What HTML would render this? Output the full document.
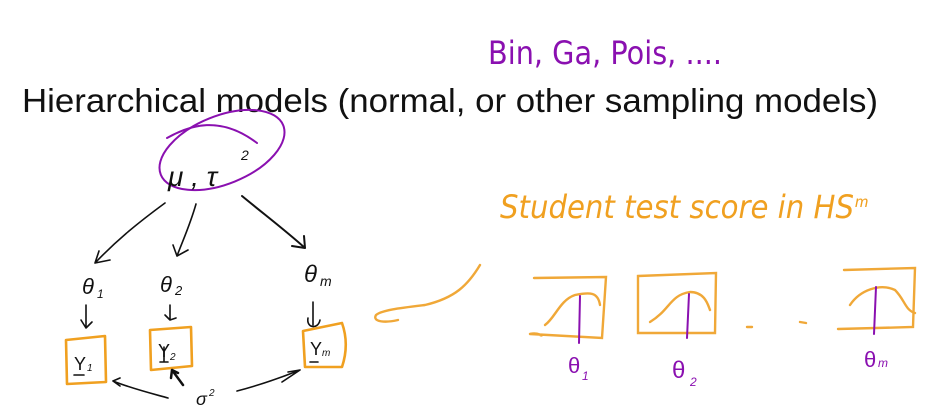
<!DOCTYPE html>
<html><head><meta charset="utf-8"><style>
html,body{margin:0;padding:0;background:#fff;width:938px;height:412px;overflow:hidden}
svg{display:block}
.k{fill:none;stroke:#111;stroke-width:1.6;stroke-linecap:round;stroke-linejoin:round}
.p{fill:none;stroke:#8a10b0;stroke-width:2;stroke-linecap:round;stroke-linejoin:round}
.o{fill:none;stroke:#f0a020;stroke-width:2.6;stroke-linecap:round;stroke-linejoin:round}
.ot{fill:none;stroke:#f0a838;stroke-width:2.4;stroke-linecap:round}
.hk{font-family:"Liberation Sans",sans-serif;font-style:italic;fill:#111}
.hp{font-family:"Liberation Sans",sans-serif;font-style:italic;fill:#8a10b0}
.ho{font-family:"Liberation Sans",sans-serif;font-style:italic;fill:#f0a020}
</style></head><body>
<svg width="938" height="412" viewBox="0 0 938 412" xmlns="http://www.w3.org/2000/svg">
<text x="22" y="112" font-family="Liberation Sans, sans-serif" font-size="33" fill="#111" textLength="856" lengthAdjust="spacingAndGlyphs">Hierarchical models (normal, or other sampling models)</text>
<text x="488" y="64" class="hp" font-size="32" textLength="234" lengthAdjust="spacingAndGlyphs" style="font-style:normal;font-family:'DejaVu Sans',sans-serif">Bin, Ga, Pois, ....</text>
<!-- ellipse -->
<ellipse cx="222" cy="150" rx="66" ry="34" transform="rotate(-22 222 150)" class="p"/>
<path class="p" d="M167 138 C190 125 220 115 257 143"/>
<text x="168" y="186" class="hk" font-size="28">μ ,  τ</text>
<text x="241" y="160" class="hk" font-size="14">2</text>
<!-- arrows -->
<path class="k" d="M165 203 C135 225 115 242 95 263 M95 263 L110 260 M95 263 L99 251"/>
<path class="k" d="M196 204 C190 225 183 240 177 256 M177 256 L173 245 M177 256 L188 250"/>
<path class="k" d="M242 196 C265 215 285 230 305 248 M305 248 L292 246 M305 248 L304 236" style="stroke-width:2"/>
<text x="82" y="294" class="hk" font-size="22">θ</text><text x="97" y="298" class="hk" font-size="12">1</text>
<text x="160" y="292" class="hk" font-size="22">θ</text><text x="175" y="295" class="hk" font-size="13">2</text>
<text x="304" y="282" class="hk" font-size="24">θ</text><text x="320" y="286" class="hk" font-size="14">m</text>
<path class="k" d="M86 305 L86 328 M81 320 L86 328 L92 322"/>
<path class="k" d="M170 305 L170 320 M165 315 L170 320 L176 318"/>
<path class="k" d="M313 302 L313 325 M308 318 C306 328 318 330 320 320"/>
<!-- Y boxes -->
<path class="o" d="M66 340 L105 336 L106 382 L67 384 Z"/>
<path class="o" d="M150 330 L191 327 L192 366 L151 370 Z"/>
<path class="o" d="M303 331 L342 323 C348 340 346 355 342 367 L305 367 Z"/>
<text x="74" y="370" class="hk" font-size="18" style="font-style:normal">Y</text><text x="87" y="371" class="hk" font-size="10">1</text>
<path class="k" d="M74 375 L84 375"/>
<text x="158" y="357" class="hk" font-size="18" style="font-style:normal">Y</text><text x="170" y="360" class="hk" font-size="10">2</text>
<path class="k" d="M160 362 L168 362 M164 347 L164 362"/>
<text x="310" y="355" class="hk" font-size="18" style="font-style:normal">Y</text><text x="322" y="356" class="hk" font-size="10">m</text>
<path class="k" d="M310 362 L318 362"/>
<!-- sigma -->
<text x="196" y="405" class="hk" font-size="18">σ</text><text x="209" y="396" class="hk" font-size="10">2</text>
<path class="k" d="M168 398 C150 393 130 388 113 381 M113 381 L120 378 M113 381 L120 386"/>
<path class="k" d="M183 385 L172 370 M172 370 L171 378 M172 370 L178 373" style="stroke-width:2.5"/>
<path class="k" d="M237 391 C260 385 280 378 300 370 M300 370 L288 372 M300 370 L282 382"/>
<!-- orange curl -->
<path class="ot" d="M480 265 C468 285 455 298 425 305 C400 308 382 310 376 315 C372 322 385 323 398 320"/>
<text x="500" y="218" class="ho" font-size="32" textLength="354" lengthAdjust="spacingAndGlyphs" style="font-family:'DejaVu Sans',sans-serif;font-weight:normal">Student test score in HS</text>
<text x="855" y="207" class="ho" font-size="16">m</text>
<!-- distribution boxes -->
<path class="ot" d="M534 278 L606 277 L602 338 L530 334 M530 334 C538 332 545 337 540 335"/>
<path class="ot" d="M545 325 C555 318 560 300 575 295 C590 292 598 292 600 305"/>
<path class="p" d="M580 296 L579 343"/>
<path class="ot" d="M638 276 L716 273 L715 333 L638 333 Z"/>
<path class="ot" d="M650 322 C670 310 670 295 690 292 C705 292 708 305 710 310"/>
<path class="p" d="M689 294 L687 338"/>
<path class="ot" d="M844 270 L915 268 L913 327 L838 329"/>
<path class="ot" d="M850 305 C860 290 880 283 895 290 C905 300 905 310 915 313"/>
<path class="p" d="M876 287 L874 334"/>
<path class="ot" d="M747 327 L752 327 M800 322 L806 323"/>
<text x="568" y="373" class="hp" font-size="22" style="font-style:normal">θ</text><text x="582" y="380" class="hp" font-size="12">1</text>
<text x="672" y="378" class="hp" font-size="24" style="font-style:normal">θ</text><text x="690" y="386" class="hp" font-size="12">2</text>
<text x="864" y="367" class="hp" font-size="22" style="font-style:normal">θ</text><text x="878" y="367" class="hp" font-size="12">m</text>
</svg>
</body></html>
